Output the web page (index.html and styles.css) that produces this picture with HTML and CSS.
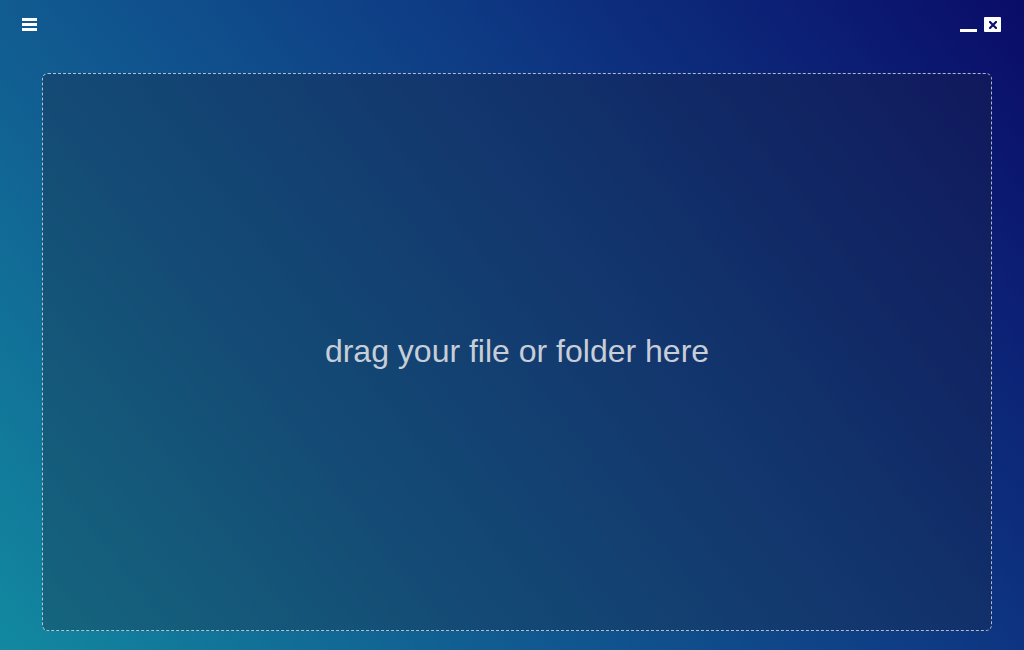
FILE: index.html
```html
<!DOCTYPE html>
<html lang="en">
<head>
<meta charset="utf-8">
<title>Drop</title>
<link rel="stylesheet" href="styles.css">
</head>
<body>
<div class="app">
  <header class="titlebar">
    <button class="menu-btn" aria-label="Menu">
      <span class="bar"></span><span class="bar"></span><span class="bar"></span>
    </button>
    <div class="win-controls">
      <button class="min-btn" aria-label="Minimize"><span class="min-line"></span></button>
      <button class="close-btn" aria-label="Close">
        <svg width="8" height="8" viewBox="0 0 8 8"><path d="M1 1L7 7M7 1L1 7" stroke="#0b1270" stroke-width="2.2" stroke-linecap="square"/></svg>
      </button>
    </div>
  </header>
  <main class="content">
    <div class="dropzone">
      <p class="drop-text">drag your file or folder here</p>
    </div>
  </main>
</div>
</body>
</html>
```

FILE: styles.css
```css
html, body {
  margin: 0;
  padding: 0;
  height: 100%;
}
body {
  font-family: "Liberation Sans", Arial, sans-serif;
  background: linear-gradient(232deg, #0a0c68 0%, #0e3a84 38%, #115f92 70%, #1289a0 100%);
  overflow: hidden;
}
.app {
  height: 650px;
  display: flex;
  flex-direction: column;
}
.titlebar {
  height: 73px;
  display: flex;
  justify-content: space-between;
  align-items: flex-start;
  padding: 0 23px 0 22px;
  box-sizing: border-box;
}
button {
  background: none;
  border: 0;
  padding: 0;
  margin: 0;
  cursor: pointer;
}
.menu-btn {
  margin-top: 18px;
  width: 15px;
  display: flex;
  flex-direction: column;
  gap: 2px;
}
.bar {
  display: block;
  width: 15px;
  height: 3px;
  background: #ffffff;
}
.win-controls {
  margin-top: 17px;
  display: flex;
  align-items: flex-start;
  gap: 7px;
}
.min-btn {
  width: 17px;
  height: 15px;
  display: flex;
  align-items: flex-end;
}
.min-line {
  display: block;
  width: 17px;
  height: 3px;
  background: #ffffff;
  margin-bottom: 0;
}
.close-btn {
  width: 17px;
  height: 15px;
  background: #ffffff;
  border-radius: 1px;
  display: flex;
  align-items: center;
  justify-content: center;
}
.close-btn svg { display: block; }
.content {
  flex: 1;
  display: flex;
  padding: 0 32px 19px 42px;
}
.dropzone {
  flex: 1;
  border: 1px dashed rgba(225, 235, 250, 0.75);
  border-radius: 6px;
  background: rgba(28, 38, 60, 0.32);
  display: flex;
  align-items: center;
  justify-content: center;
}
.drop-text {
  margin: 0 0 2px 0;
  font-size: 32px;
  color: #c8ced8;
  letter-spacing: 0;
}
```
